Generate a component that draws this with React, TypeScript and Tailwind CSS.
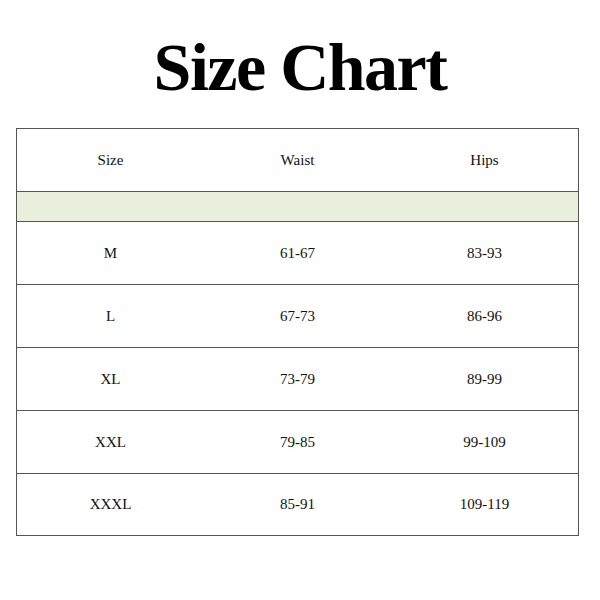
const rows = [
  ["M", "61-67", "83-93"],
  ["L", "67-73", "86-96"],
  ["XL", "73-79", "89-99"],
  ["XXL", "79-85", "99-109"],
  ["XXXL", "85-91", "109-119"],
];

function Row({ cells, last }: { cells: string[]; last?: boolean }) {
  return (
    <div
      className={
        last
          ? "grid grid-cols-3 h-[62px] border-t border-[#555] items-center text-center text-[15px] text-[#111]"
          : "grid grid-cols-3 h-[63px] border-t border-[#555] items-center text-center text-[15px] text-[#111]"
      }
    >
      {cells.map((c, i) => (
        <span key={i}>{c}</span>
      ))}
    </div>
  );
}

export default function App() {
  return (
    <div className="w-[600px] h-[600px] bg-white font-['Liberation_Serif',serif]">
      <div className="h-[128px] flex items-start justify-center pt-[33px]">
        <h1 className="text-[68px] leading-none font-bold text-black tracking-[-1.5px]">Size Chart</h1>
      </div>
      <div className="ml-[16px] w-[563px] border-l border-r border-b border-[#555]">
        <div className="grid grid-cols-3 h-[63px] border-t border-[#555] items-center text-center text-[15px] text-[#111]">
          <span>Size</span>
          <span>Waist</span>
          <span>Hips</span>
        </div>
        <div className="h-[30px] border-t border-[#555] bg-[#e8f0dc]" />
        {rows.map((r, i) => (
          <Row key={r[0]} cells={r} last={i === rows.length - 1} />
        ))}
      </div>
    </div>
  );
}
